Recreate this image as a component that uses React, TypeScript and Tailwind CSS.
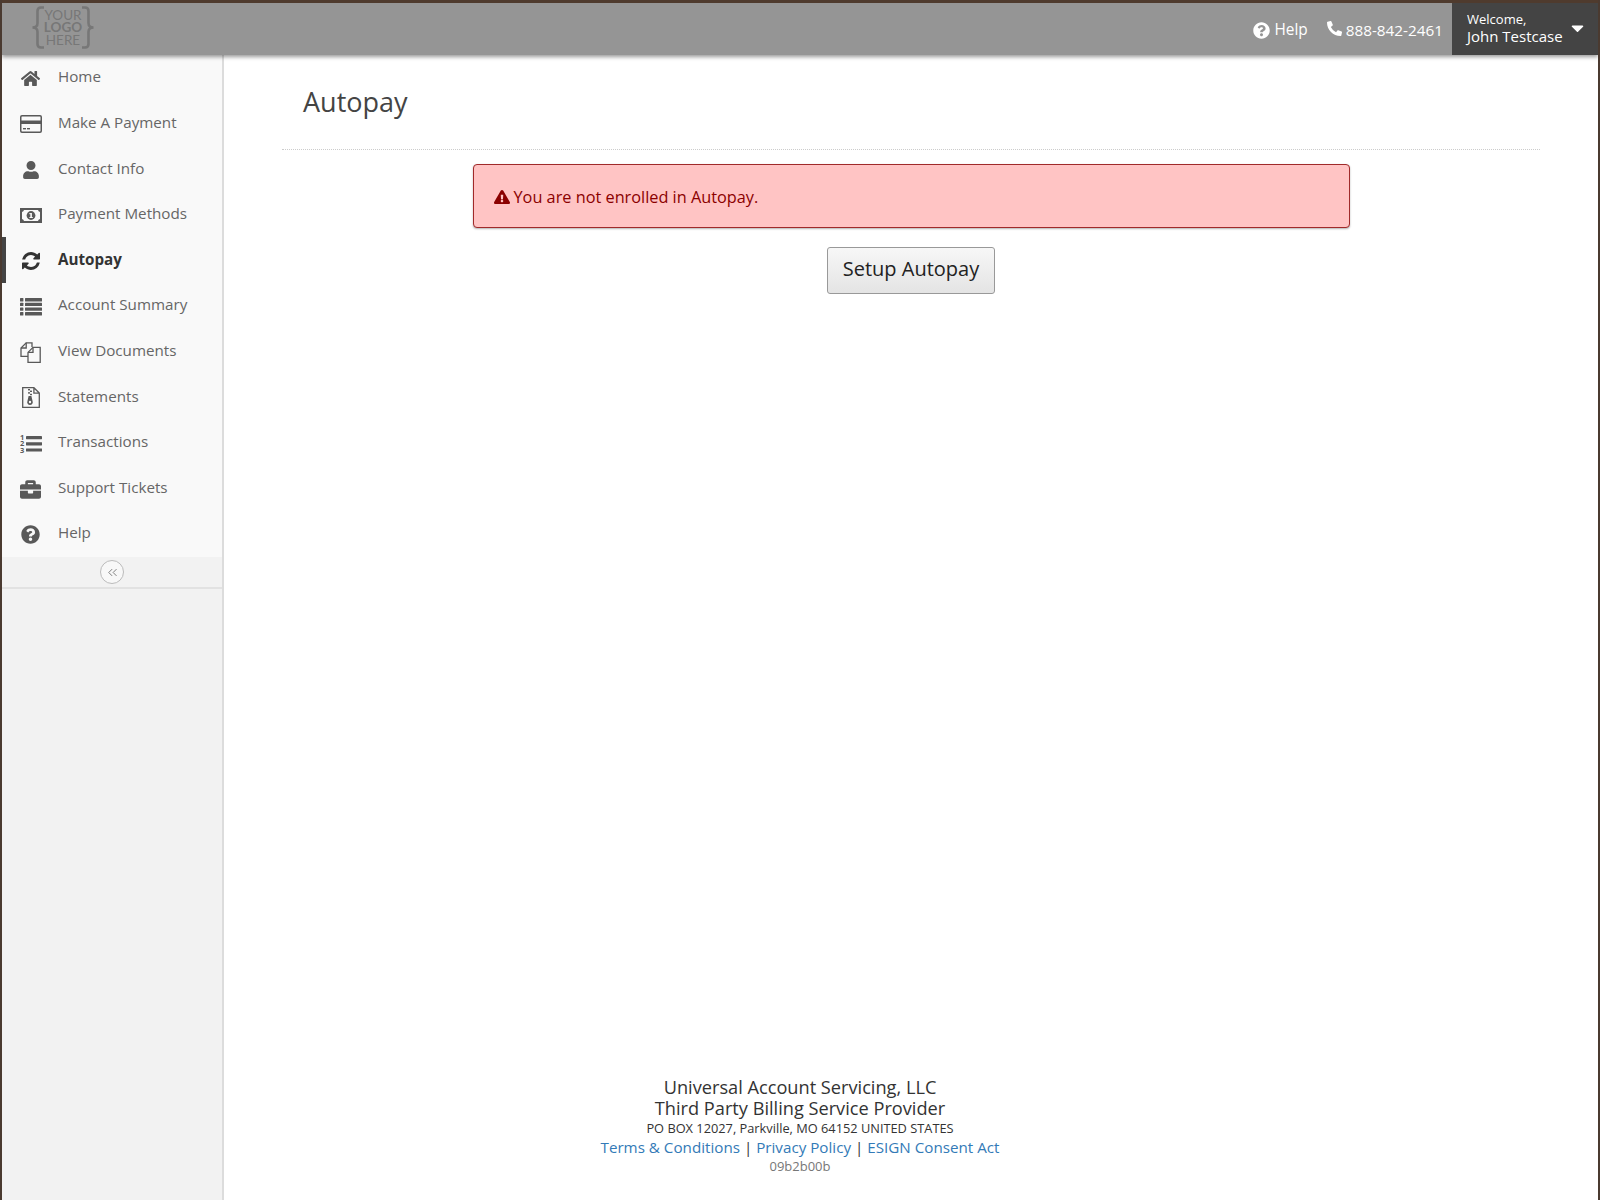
import React from "react";
import {
  FaHome, FaUser, FaBriefcase, FaQuestionCircle, FaExclamationTriangle, FaPhoneAlt, FaCaretDown,
} from "react-icons/fa";
import { ChevronsLeft } from "lucide-react";

type IconProps = { className?: string };

const CardIcon = ({ className }: IconProps) => (
  <svg viewBox="0 0 22 18" className={className} fill="currentColor">
    <path fillRule="evenodd" d="M2 0h18a2 2 0 0 1 2 2v14a2 2 0 0 1-2 2H2a2 2 0 0 1-2-2V2a2 2 0 0 1 2-2zm-.5 9v7c0 .3.2.5.5.5h18c.3 0 .5-.2.5-.5V9zm0-6v2.5h19V2c0-.3-.2-.5-.5-.5H2c-.3 0-.5.2-.5.5z" />
    <rect x="3" y="13" width="3" height="1.4" />
    <rect x="7" y="13" width="3" height="1.4" />
  </svg>
);

const MoneyIcon = ({ className }: IconProps) => (
  <svg viewBox="0 0 22 15" className={className} fill="currentColor">
    <path fillRule="evenodd" d="M0 0h22v15H0zM4 2a2.5 2.5 0 0 1-2 2v7a2.5 2.5 0 0 1 2 2h14a2.5 2.5 0 0 1 2-2V4a2.5 2.5 0 0 1-2-2z" />
    <circle cx="11" cy="7.5" r="4.4" />
    <rect x="10.3" y="5" width="1.6" height="5" fill="#f9f9f9" />
    <rect x="9.4" y="5" width="1.4" height="1.2" fill="#f9f9f9" />
    <rect x="9.4" y="9" width="3.4" height="1" fill="#f9f9f9" />
  </svg>
);

const RefreshIcon = ({ className }: IconProps) => (
  <svg viewBox="128 128 1536 1536" className={className} fill="currentColor">
    <path d="M1639 1056q0 5-1 7-64 268-268 434.5t-478 166.5q-146 0-282.5-55t-243.5-157l-129 129q-19 19-45 19t-45-19-19-45v-448q0-26 19-45t45-19h448q26 0 45 19t19 45-19 45l-137 137q71 66 161 102t187 36q134 0 250-65t186-179q11-17 53-117 8-23 30-23h192q13 0 22.5 9.5t9.5 22.5zm25-800v448q0 26-19 45t-45 19h-448q-26 0-45-19t-19-45 19-45l138-138q-148-137-349-137-134 0-250 65t-186 179q-11 17-53 117-8 23-30 23h-199q-13 0-22.5-9.5t-9.5-22.5v-7q65-268 270-434.5t480-166.5q146 0 284 55.5t245 156.5l130-129q19-19 45-19t45 19 19 45z" />
  </svg>
);

const ListIcon = ({ className }: IconProps) => (
  <svg viewBox="0 0 22 18" className={className} fill="currentColor">
    {[0, 4.7, 9.4, 14.1].map((y) => (
      <g key={y}>
        <rect x="0" y={y} width="3.4" height="3.4" rx="0.5" />
        <rect x="5" y={y} width="17" height="3.4" rx="0.5" />
      </g>
    ))}
  </svg>
);

const CopyIcon = ({ className }: IconProps) => (
  <svg viewBox="0 0 21 21" className={className} fill="none" stroke="currentColor" strokeWidth="1.3">
    <path d="M12 5V.8H6.2L1 6v8.4h7" />
    <path d="M6.2.8V6H1" />
    <path d="M13 5.4h7.2v15H8V10.4z" />
    <path d="M13 5.4v5H8" />
  </svg>
);

const ArchiveIcon = ({ className }: IconProps) => (
  <svg viewBox="0 0 18 21" className={className}>
    <path d="M.7.7h11.2l5.4 5.4v14.2H.7z M11.9.7v5.4h5.4" fill="none" stroke="currentColor" strokeWidth="1.3" />
    <g fill="currentColor">
      <rect x="6" y="2" width="2" height="1.4" />
      <rect x="8" y="3.6" width="2" height="1.4" />
      <rect x="6" y="5.2" width="2" height="1.4" />
      <rect x="8" y="6.8" width="2" height="1.4" />
      <path d="M6.6 9h2.8l1.2 5.2a2.8 2.8 0 1 1-5.2 0z" />
    </g>
    <circle cx="8" cy="15" r="1.2" fill="#f9f9f9" />
  </svg>
);

const ListOlIcon = ({ className }: IconProps) => (
  <svg viewBox="0 0 22 21" className={className} fill="currentColor">
    <text x="0" y="6.5" fontSize="7.5" fontWeight="700" fontFamily="Open Sans, sans-serif">1</text>
    <text x="0" y="13" fontSize="7.5" fontWeight="700" fontFamily="Open Sans, sans-serif">2</text>
    <text x="0" y="19.5" fontSize="7.5" fontWeight="700" fontFamily="Open Sans, sans-serif">3</text>
    <rect x="6" y="3" width="16" height="3.2" rx="0.4" />
    <rect x="6" y="9.2" width="16" height="3.2" rx="0.4" />
    <rect x="6" y="15.4" width="16" height="3.2" rx="0.4" />
  </svg>
);

const items: { label: string; icon: React.ComponentType<IconProps>; active?: boolean; cls: string }[] = [
  { label: "Home", icon: FaHome, cls: "w-[19px] h-[19px]" },
  { label: "Make A Payment", icon: CardIcon, cls: "w-[22px] h-[18px]" },
  { label: "Contact Info", icon: FaUser, cls: "w-[18px] h-[18px]" },
  { label: "Payment Methods", icon: MoneyIcon, cls: "w-[22px] h-[15px]" },
  { label: "Autopay", icon: RefreshIcon, active: true, cls: "w-[18px] h-[18px]" },
  { label: "Account Summary", icon: ListIcon, cls: "w-[22px] h-[18px]" },
  { label: "View Documents", icon: CopyIcon, cls: "w-[21px] h-[21px]" },
  { label: "Statements", icon: ArchiveIcon, cls: "w-[18px] h-[21px]" },
  { label: "Transactions", icon: ListOlIcon, cls: "w-[22px] h-[21px]" },
  { label: "Support Tickets", icon: FaBriefcase, cls: "w-[21px] h-[21px]" },
  { label: "Help", icon: FaQuestionCircle, cls: "w-[19px] h-[19px]" },
];

const Brace = ({ className }: IconProps) => (
  <svg viewBox="0 0 14 43" className={className} fill="none" stroke="currentColor" strokeWidth="2.6">
    <path d="M13 1.5H10Q6.5 1.5 6.5 5V17Q6.5 21.5 1.5 21.5Q6.5 21.5 6.5 26V38Q6.5 41.5 10 41.5H13" />
  </svg>
);

export default function App() {
  return (
    <div className="w-[1600px] h-[1200px] flex flex-col overflow-hidden bg-white border-x-2 border-[#4a3a30] font-['Open_Sans',sans-serif] text-[#333]">
      <header className="h-[55px] shrink-0 flex items-stretch justify-between bg-[#959595] border-t-[3px] border-[#4f3b2e] shadow-[0_2px_4px_rgba(0,0,0,0.4)] relative z-10">
        <div className="pl-[29px] flex items-center">
          <div className="flex items-center text-[#777] -mt-[3px]">
            <Brace className="w-[14px] h-[43px]" />
            <div className="flex flex-col items-center w-[36px] text-[13.5px] leading-[12.5px] font-['Lato',sans-serif]">
              <span>YOUR</span>
              <span className="font-bold">LOGO</span>
              <span>HERE</span>
            </div>
            <Brace className="w-[14px] h-[43px] -scale-x-100" />
          </div>
        </div>
        <div className="flex items-stretch text-white">
          <div className="flex items-center gap-[4px] text-[15.4px] mr-[19px] pt-[2px]">
            <FaQuestionCircle className="w-[17px] h-[17px]" />
            <span>Help</span>
          </div>
          <div className="flex items-center gap-[4px] text-[15.3px] mr-[9px] pt-[2px]">
            <FaPhoneAlt className="w-[15px] h-[15px] -mt-[3px]" />
            <span>888-842-2461</span>
          </div>
          <div className="w-[146px] bg-[#444] flex items-center justify-between pl-[15px] pr-[14px]">
            <div className="flex flex-col -mt-[3px]">
              <span className="text-[13px] leading-[17px]">Welcome,</span>
              <span className="text-[15px] leading-[17px]">John Testcase</span>
            </div>
            <FaCaretDown className="w-[13px] h-[20px] -mt-[3px]" />
          </div>
        </div>
      </header>
      <div className="flex-1 flex min-h-0">
        <aside className="w-[222px] shrink-0 bg-[#f2f2f2] border-r-2 border-[#dcdcdc] flex flex-col">
          <nav className="bg-[#f9f9f9] flex flex-col">
            {items.map(({ label, icon: Icon, active, cls }) => (
              <div
                key={label}
                className={`h-[45.6px] flex items-center text-[15.2px] border-l-[4px] ${active ? "border-[#444] font-bold text-[#333]" : "border-transparent text-[#666]"}`}
              >
                <span className="w-[52px] flex justify-center shrink-0 pr-[3px] mt-[2px]">
                  <Icon className={`${cls} ${active ? "text-[#333]" : "text-[#595959]"}`} />
                </span>
                <span className="-mt-[2px]">{label}</span>
              </div>
            ))}
          </nav>
          <div className="h-[32px] border-b-2 border-[#e2e2e2] flex items-center justify-center">
            <span className="mt-px w-[24px] h-[24px] rounded-full border border-[#bbb] bg-[#f8f8f8] flex items-center justify-center">
              <ChevronsLeft strokeWidth={1.5} className="w-[15px] h-[15px] text-[#777]" />
            </span>
          </div>
        </aside>
        <main className="flex-1 flex flex-col min-w-0">
          <div className="mx-[58px] h-[95px] border-b border-dotted border-[#ccc] pl-[21px] pt-[29px]">
            <h1 className="text-[27px] leading-[36px] font-normal text-[#444]">Autopay</h1>
          </div>
          <div className="flex flex-col items-center mt-[14px]">
            <div className="w-[877px] h-[64px] bg-[#ffc4c4] border border-[#a02a2a] rounded-[4px] shadow-[0_1px_2px_rgba(0,0,0,0.3)] flex items-center pl-[20px] pt-[2px] text-[16.3px] text-[#8b0000]">
              <FaExclamationTriangle className="w-[16px] h-[16px] mr-[4px]" />
              <span>You are not enrolled in Autopay.</span>
            </div>
            <button className="mt-[19px] w-[168px] h-[47px] pb-[4px] rounded-[3px] border border-[#999] bg-gradient-to-b from-[#f7f7f7] to-[#e4e4e4] text-[20px] text-[#222]">
              Setup Autopay
            </button>
          </div>
          <footer className="mt-auto -ml-[222px] pb-[24px] flex flex-col items-center text-[#333]">
            <p className="text-[18.2px] leading-[20.5px]">Universal Account Servicing, LLC</p>
            <p className="text-[18.2px] leading-[20.5px]">Third Party Billing Service Provider</p>
            <p className="text-[12.8px] leading-[20px]">PO BOX 12027, Parkville, MO 64152 UNITED STATES</p>
            <p className="text-[15.2px] leading-[18px]">
              <a className="text-[#337ab7]">Terms &amp; Conditions</a> | <a className="text-[#337ab7]">Privacy Policy</a> | <a className="text-[#337ab7]">ESIGN Consent Act</a>
            </p>
            <p className="text-[13px] leading-[20px] text-[#777]">09b2b00b</p>
          </footer>
        </main>
      </div>
    </div>
  );
}
